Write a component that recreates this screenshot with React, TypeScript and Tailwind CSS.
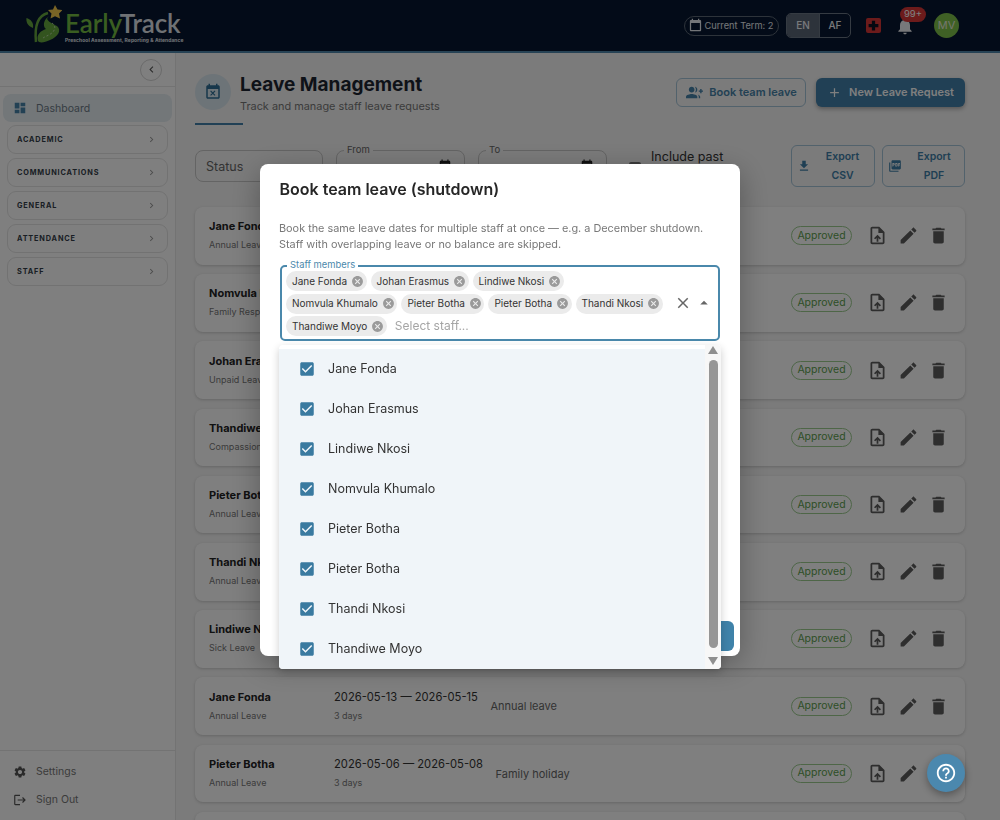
import React from 'react';

const P = {
  dash: 'M3 13h8V3H3v10zm0 8h8v-6H3v6zm10 0h8V11h-8v10zm0-18v6h8V3h-8z',
  settings: 'M19.14 12.94c.04-.3.06-.61.06-.94 0-.32-.02-.64-.07-.94l2.03-1.58c.18-.14.23-.41.12-.61l-1.92-3.32c-.12-.22-.37-.29-.59-.22l-2.39.96c-.5-.38-1.03-.7-1.62-.94l-.36-2.54c-.04-.24-.24-.41-.48-.41h-3.84c-.24 0-.43.17-.47.41l-.36 2.54c-.59.24-1.13.57-1.62.94l-2.39-.96c-.22-.08-.47 0-.59.22L2.74 8.87c-.12.21-.08.47.12.61l2.03 1.58c-.05.3-.09.63-.09.94s.02.64.07.94l-2.03 1.58c-.18.14-.23.41-.12.61l1.92 3.32c.12.22.37.29.59.22l2.39-.96c.5.38 1.03.7 1.62.94l.36 2.54c.05.24.24.41.48.41h3.84c.24 0 .44-.17.47-.41l.36-2.54c.59-.24 1.13-.56 1.62-.94l2.39.96c.22.08.47 0 .59-.22l1.92-3.32c.12-.22.07-.47-.12-.61l-2.01-1.58zM12 15.6c-1.98 0-3.6-1.62-3.6-3.6s1.62-3.6 3.6-3.6 3.6 1.62 3.6 3.6-1.62 3.6-3.6 3.6z',
  logout: 'M17 7l-1.41 1.41L18.17 11H8v2h10.17l-2.58 2.58L17 17l5-5zM4 5h8V3H4c-1.1 0-2 .9-2 2v14c0 1.1.9 2 2 2h8v-2H4V5z',
  edit: 'M3 17.25V21h3.75L17.81 9.94l-3.75-3.75L3 17.25zM20.71 7.04c.39-.39.39-1.02 0-1.41l-2.34-2.34c-.39-.39-1.02-.39-1.41 0l-1.83 1.83 3.75 3.75 1.83-1.83z',
  trash: 'M6 19c0 1.1.9 2 2 2h8c1.1 0 2-.9 2-2V7H6v12zM19 4h-3.5l-1-1h-5l-1 1H5v2h14V4z',
  upload: 'M14 2H6c-1.1 0-1.99.9-1.99 2L4 20c0 1.1.89 2 1.99 2H18c1.1 0 2-.9 2-2V8l-6-6zm4 18H6V4h7v5h5v11zM8 15.01l1.41 1.41L11 14.84V19h2v-4.16l1.59 1.59L16 15.01 12.01 11z',
  download: 'M19 9h-4V3H9v6H5l7 7 7-7zM5 18v2h14v-2H5z',
  pdf: 'M20 2H8c-1.1 0-2 .9-2 2v12c0 1.1.9 2 2 2h12c1.1 0 2-.9 2-2V4c0-1.1-.9-2-2-2zm-8.5 7.5c0 .83-.67 1.5-1.5 1.5H9v2H7.5V7H10c.83 0 1.5.67 1.5 1.5v1zm5 2c0 .83-.67 1.5-1.5 1.5h-2.5V7H15c.83 0 1.5.67 1.5 1.5v3zm4-3H19v1h1.5V11H19v2h-1.5V7h3v1.5zM9 9.5h1v-1H9v1zM4 6H2v14c0 1.1.9 2 2 2h14v-2H4V6zm10 5.5h1v-3h-1v3z',
  cancel: 'M12 2C6.47 2 2 6.47 2 12s4.47 10 10 10 10-4.47 10-10S17.53 2 12 2zm5 13.59L15.59 17 12 13.41 8.41 17 7 15.59 10.59 12 7 8.41 8.41 7 12 10.59 15.59 7 17 8.41 13.41 12 17 15.59z',
  close: 'M19 6.41 17.59 5 12 10.59 6.41 5 5 6.41 10.59 12 5 17.59 6.41 19 12 13.41 17.59 19 19 17.59 13.41 12z',
  check: 'M19 3H5c-1.11 0-2 .9-2 2v14c0 1.1.89 2 2 2h14c1.11 0 2-.9 2-2V5c0-1.1-.89-2-2-2zm-9 14l-5-5 1.41-1.41L10 14.17l7.59-7.59L19 8l-9 9z',
  bell: 'M12 22c1.1 0 2-.9 2-2h-4c0 1.1.89 2 2 2zm6-6v-5c0-3.07-1.64-5.64-4.5-6.32V4c0-.83-.67-1.5-1.5-1.5s-1.5.67-1.5 1.5v.68C7.63 5.36 6 7.92 6 11v5l-2 2v1h16v-1l-2-2z',
  group: 'M22 9V7h-2v2h-2v2h2v2h2v-2h2V9h-2zM8 12c2.21 0 4-1.79 4-4s-1.79-4-4-4-4 1.79-4 4 1.79 4 4 4zm0 2c-2.67 0-8 1.34-8 4v2h16v-2c0-2.66-5.33-4-8-4zm4.51-2.05C13.43 10.88 14 9.5 14 8s-.57-2.88-1.49-3.95C14.47 4.27 16 5.95 16 8s-1.53 3.73-3.49 3.95zM16.53 14.83C17.42 15.66 18 16.7 18 18v2h2v-2c0-1.45-1.59-2.51-3.47-3.17z',
  event: 'M9.31 17l2.44-2.44L14.19 17l1.06-1.06-2.44-2.44 2.44-2.44L14.19 10l-2.44 2.44L9.31 10l-1.06 1.06 2.44 2.44-2.44 2.44L9.31 17zM19 3h-1V1h-2v2H8V1H6v2H5c-1.11 0-1.99.9-1.99 2L3 19c0 1.1.89 2 2 2h14c1.1 0 2-.9 2-2V5c0-1.1-.9-2-2-2zm0 16H5V8h14v11z',
  help: 'M11 18h2v-2h-2v2zm1-16C6.48 2 2 6.48 2 12s4.48 10 10 10 10-4.48 10-10S17.52 2 12 2zm0 18c-4.41 0-8-3.59-8-8s3.59-8 8-8 8 3.59 8 8-3.59 8-8 8zm0-14c-2.21 0-4 1.79-4 4h2c0-1.1.9-2 2-2s2 .9 2 2c0 2-3 1.75-3 5h2c0-2.25 3-2.5 3-5 0-2.21-1.79-4-4-4z',
  calendar: 'M19 3h-1V1h-2v2H8V1H6v2H5c-1.11 0-2 .9-2 2v14c0 1.1.89 2 2 2h14c1.1 0 2-.9 2-2V5c0-1.1-.9-2-2-2zm0 16H5V8h14v11z',
  plus: 'M19 13h-6v6h-2v-6H5v-2h6V5h2v6h6v2z',
  left: 'M15.41 7.41 14 6l-6 6 6 6 1.41-1.41L10.83 12z',
  right: 'M10 6 8.59 7.41 13.17 12l-4.58 4.59L10 18l6-6z',
};

const Icon = ({ d, size = 24, className = '' }: { d: string; size?: number; className?: string }) => (
  <svg viewBox="0 0 24 24" width={size} height={size} fill="currentColor" className={`shrink-0 ${className}`}>
    <path d={d} />
  </svg>
);

const groups = ['Academic', 'Communications', 'General', 'Attendance', 'Staff'];

const rows = [
  ['Jane Fonda', 'Annual Leave', '2026-07-01 — 2026-07-03', 'Annual leave'],
  ['Nomvula Khumalo', 'Family Responsibility', '2026-06-22 — 2026-06-23', 'Family matter'],
  ['Johan Erasmus', 'Unpaid Leave', '2026-06-15 — 2026-06-19', 'Personal'],
  ['Thandiwe Moyo', 'Compassionate Leave', '2026-06-10 — 2026-06-11', 'Funeral'],
  ['Pieter Botha', 'Annual Leave', '2026-06-01 — 2026-06-03', 'Annual leave'],
  ['Thandi Nkosi', 'Annual Leave', '2026-05-25 — 2026-05-27', 'Annual leave'],
  ['Lindiwe Nkosi', 'Sick Leave', '2026-05-18 — 2026-05-19', 'Flu'],
  ['Jane Fonda', 'Annual Leave', '2026-05-13 — 2026-05-15', 'Annual leave'],
  ['Pieter Botha', 'Annual Leave', '2026-05-06 — 2026-05-08', 'Family holiday'],
  ['Thandi Nkosi', 'Annual Leave', '2026-04-27 — 2026-04-29', 'Annual leave'],
];

const staff = ['Jane Fonda', 'Johan Erasmus', 'Lindiwe Nkosi', 'Nomvula Khumalo', 'Pieter Botha', 'Pieter Botha', 'Thandi Nkosi', 'Thandiwe Moyo'];

const Header = () => (
  <header className="h-[53px] shrink-0 bg-[#071730] border-b-2 border-[#4f86aa] flex items-center pl-[26px] pr-[41px]">
    <svg viewBox="0 0 36 40" width="36" height="40" className="shrink-0 -mt-[3px]">
      <path d="M7 24C1 22 0 17 0.500 14 4 15 8 18 7 24z" fill="#67a93f" />
      <path d="M22 9C14 11 8 19 10 38" fill="none" stroke="#67a93f" strokeWidth="2.5" />
      <path d="M24 12C17 15 25 19 31 22 36 26 32 33 24 36 18 39 13 39 12 37 10 30 15 27 20 25 16 22 18 14 24 12z" fill="#67a93f" />
      <path d="M26 19C29 21 30 24 27 28 24 31 20 32 17 34" fill="none" stroke="#d9e8cf" strokeWidth="0.7" strokeDasharray="2 2" />
      <path d="M29 1l2.500 4.500 5 .5-3.500 3.500 1 5-5-2.300-4.500 2.300 1-5-3.500-3.500 5-.5z" fill="#f5c94c" />
    </svg>
    <div className="ml-[3px] mt-[1px] flex flex-col">
      <div className="text-[26px] leading-[28px] font-semibold tracking-[-0.1px] font-['Lato',sans-serif]">
        <span className="text-[#74bd42]">Early</span>
        <span className="text-[#dfe3e8]">Track</span>
      </div>
      <div className="text-[4.9px] leading-[7px] font-bold tracking-[0.1px] text-[#e3e8ef] whitespace-nowrap">Preschool Assessment, Reporting &amp; Attendance</div>
    </div>
    <div className="ml-auto flex items-center">
      <div className="h-[20px] w-[95px] rounded-full border border-[#5a6675] flex items-center pl-[3px] gap-[1.5px] text-[#e8edf2]">
        <Icon d={P.calendar} size={15} />
        <span className="text-[9.25px] whitespace-nowrap">Current Term: 2</span>
      </div>
      <div className="ml-[7px] h-[25px] w-[65px] rounded-[5px] border border-[#6b7684] flex overflow-hidden text-[10px] font-medium text-[#f0f3f6]">
        <div className="w-[33px] bg-[#5b6676] flex items-center justify-center border-r border-[#6b7684]">EN</div>
        <div className="flex-1 flex items-center justify-center">AF</div>
      </div>
      <div className="ml-[15px] w-[15px] h-[15px] rounded-[2px] bg-[#d93636] flex items-center justify-center">
        <Icon d="M9 3h6v6h6v6h-6v6H9v-6H3V9h6z" size={13} className="text-[#0a1020]" />
      </div>
      <div className="relative ml-[14px] w-[20px] h-[20px] text-[#eef1f4]">
        <Icon d={P.bell} size={20} />
        <span className="absolute -top-[9px] left-[5px] h-[15px] w-[26px] rounded-full bg-[#d93636] text-white text-[9.5px] flex items-center justify-center">99+</span>
      </div>
      <div className="ml-[19px] w-[25px] h-[25px] rounded-full bg-[#7fc24a] text-[#e8eedd] text-[11px] flex items-center justify-center">MV</div>
    </div>
  </header>
);

const Sidebar = () => (
  <aside className="w-[176px] shrink-0 bg-white border-r border-[#e6e6e6] flex flex-col">
    <div className="h-[34px] shrink-0 border-b border-[#e6e6e6] flex items-center justify-end pr-[13px]">
      <div className="w-[22px] h-[22px] rounded-full border border-[#d5d5d5] flex items-center justify-center text-[#555]">
        <Icon d={P.left} size={13} />
      </div>
    </div>
    <div className="mt-[7px] mx-[3px] h-[28px] rounded-lg bg-[#e6eef3] flex items-center pl-[10px] gap-[9px] w-[169px]">
      <Icon d={P.dash} size={14} className="text-[#4682a9]" />
      <span className="text-[10.5px] pt-[1px] text-[#6c7a86]">Dashboard</span>
    </div>
    <div className="mt-[3px] mx-[7px] w-[161px] flex flex-col gap-[4px]">
      {groups.map((g) => (
        <div key={g} className="h-[29px] rounded-[9px] border border-[#e4e4e4] flex items-center justify-between pl-[9px] pr-[10px]">
          <span className="text-[7.3px] pt-[2px] font-bold uppercase tracking-[0.85px] text-[#333c48]">{g}</span>
          <Icon d={P.right} size={11} className="text-[#999]" />
        </div>
      ))}
    </div>
    <div className="mt-auto h-[70px] border-t border-[#e6e6e6] flex flex-col pl-[13px] pt-[13px] gap-[12px] text-[#777] shrink-0">
      <div className="flex items-center gap-[9px] h-[16px]">
        <Icon d={P.settings} size={14} className="text-[#555]" />
        <span className="text-[10.5px]">Settings</span>
      </div>
      <div className="flex items-center gap-[9px] h-[16px]">
        <Icon d={P.logout} size={14} className="text-[#555]" />
        <span className="text-[10.5px]">Sign Out</span>
      </div>
    </div>
  </aside>
);

const DateField = ({ label, width }: { label: string; width: string }) => (
  <div className={`relative h-[32px] ${width} rounded-lg border border-[#c8c8c8] flex items-center justify-between pl-[13px] pr-[12px]`}>
    <span className="absolute -top-[7px] left-[7px] bg-[#f6f6f6] px-[3px] text-[9.5px] leading-[12px] text-[#666]">{label}</span>
    <span className="text-[12px] mt-[7px] text-[#333]">dd/mm/yyyy</span>
    <Icon d={P.calendar} size={14} className="text-[#222]" />
  </div>
);

const Row = ({ r }: { r: string[] }) => (
  <div className="h-[57.6px] shrink-0 rounded-lg bg-white shadow-[0_1px_3px_rgba(0,0,0,0.18)] flex items-center pl-[14px] pr-[16px]">
    <div className="w-[125px] shrink-0">
      <div className="text-[11px] leading-[14px] font-bold text-[#222] whitespace-nowrap">{r[0]}</div>
      <div className="mt-[5px] text-[9px] leading-[14px] text-[#777] whitespace-nowrap">{r[1]}</div>
    </div>
    <div className="shrink-0">
      <div className="text-[11.2px] leading-[14px] text-[#333] whitespace-nowrap">{r[2]}</div>
      <div className="mt-[5px] text-[9px] leading-[14px] text-[#777]">3 days</div>
    </div>
    <div className="ml-[12.500px] mt-[1px] text-[11px] text-[#666] whitespace-nowrap">{r[3]}</div>
    <div className="ml-auto h-[19px] w-[61px] rounded-full border border-[#9ccc8f] text-[#5c9e4d] text-[10.5px] flex items-center justify-center">Approved</div>
    <div className="ml-[15px] flex items-center gap-[9.500px] text-[#5c5c5c]">
      <Icon d={P.upload} size={21} />
      <Icon d={P.edit} size={21} />
      <Icon d={P.trash} size={21} />
    </div>
  </div>
);

const Main = () => (
  <main className="flex-1 min-w-0 overflow-hidden pl-[19px] pr-[35px] pt-[21px] flex flex-col">
    <div className="flex justify-between shrink-0 h-[36px]">
      <div className="flex">
        <div className="w-[36px] h-[36px] rounded-full bg-[#dbe8f0] flex items-center justify-center text-[#2f6f96]">
          <Icon d={P.event} size={18} />
        </div>
        <div className="ml-[9px] -mt-[1px]">
          <h1 className="text-[19px] leading-[24px] font-bold text-[#1c2530]">Leave Management</h1>
          <p className="mt-[1px] text-[10.9px] leading-[16px] text-[#777]">Track and manage staff leave requests</p>
        </div>
      </div>
      <div className="flex gap-[10px] mt-[4px]">
        <div className="h-[29px] w-[130px] rounded-md border border-[#a5c4d8] flex items-center justify-center gap-[6px] pl-[1px] text-[#4682a9]">
          <Icon d={P.group} size={17} />
          <span className="text-[11px] font-semibold whitespace-nowrap">Book team leave</span>
        </div>
        <div className="h-[29px] w-[149px] rounded-md bg-[#4280aa] shadow-[0_2px_4px_rgba(0,0,0,0.3)] flex items-center justify-center gap-[7px] text-white">
          <Icon d={P.plus} size={15} />
          <span className="text-[11px] font-semibold whitespace-nowrap">New Leave Request</span>
        </div>
      </div>
    </div>
    <div className="mt-[13px] h-[2px] w-[48px] bg-[#4280aa] shrink-0" />
    <div className="mt-[20px] h-[42px] shrink-0 flex items-center">
      <div className="h-[32px] w-[128px] rounded-lg border border-[#c8c8c8] flex items-center pl-[10px] pt-[2px] text-[12.5px] text-[#666]">Status</div>
      <div className="ml-[13px]"><DateField label="From" width="w-[129px]" /></div>
      <div className="ml-[13px]"><DateField label="To" width="w-[129px]" /></div>
      <div className="ml-[22px] w-[12px] h-[12px] rounded-[2px] border-2 border-[#777] mt-[3px]" />
      <div className="ml-[10px] w-[76px] text-[12.5px] leading-[19px] text-[#333]">Include past leave</div>
      <div className="ml-auto flex gap-[7px]">
        <div className="h-[42px] w-[84px] rounded-md border border-[#a5c4d8] flex items-center pl-[5px] text-[#3f7fa8]">
          <Icon d={P.download} size={14} />
          <span className="flex-1 text-center px-[9px] text-[10.5px] font-semibold leading-[19px]">Export CSV</span>
        </div>
        <div className="h-[42px] w-[83px] rounded-md border border-[#a5c4d8] flex items-center pl-[5px] text-[#3f7fa8]">
          <Icon d={P.pdf} size={14} />
          <span className="flex-1 text-center pl-[10px] pr-[8px] text-[10.5px] font-semibold leading-[19px]">Export PDF</span>
        </div>
      </div>
    </div>
    <div className="mt-[20px] flex flex-col gap-[9.6px]">
      {rows.map((r, i) => <Row key={i} r={r} />)}
    </div>
  </main>
);

const Chip = ({ name }: { name: string }) => (
  <span className="h-[20px] rounded-full bg-[#ebebeb] flex items-center pl-[6px] pr-[2.5px] gap-[4px] text-[10px] text-[#333] whitespace-nowrap">
    {name}
    <Icon d={P.cancel} size={13} className="text-[#9a9a9a]" />
  </span>
);

const StaffSelect = () => (
  <div className="relative mt-[13px] mx-[20px] h-[76px] rounded-[5px] border-2 border-[#4a88ab] flex">
    <span className="absolute -top-[8px] left-[5px] bg-white px-[3px] text-[9.4px] leading-[12px] text-[#4a88ab]">Staff members</span>
    <div className="flex-1 flex flex-wrap content-start gap-x-[4px] gap-y-[2.500px] pl-[4px] pr-[3px] pt-[4px]">
      {staff.map((s, i) => <Chip key={i} name={s} />)}
      <span className="ml-[4px] h-[20px] flex items-center text-[12px] text-[#a5a5a5]">Select staff...</span>
    </div>
    <div className="w-[47px] shrink-0 flex items-center pl-[3px] text-[#666]">
      <Icon d={P.close} size={18} />
      <Icon d="m7 14 5-5 5 5z" size={18} className="ml-[3px]" />
    </div>
  </div>
);

const StaffList = () => (
  <div className="absolute left-[19px] top-[181px] w-[442px] h-[324px] bg-white rounded-[4px] shadow-[0_3px_8px_rgba(0,0,0,0.2)] flex pt-[4px] overflow-hidden">
    <div className="w-[426px] flex flex-col">
      {staff.map((s, i) => (
        <div key={i} className="h-[40px] shrink-0 bg-[#f0f5f9] flex items-center pl-[19px] gap-[12px]">
          <Icon d={P.check} size={18} className="text-[#3a7aa0]" />
          <span className="text-[12.5px] text-[#333]">{s}</span>
        </div>
      ))}
    </div>
    <div className="flex-1 bg-[#f7f7f7] flex flex-col items-center -mt-[4px] text-[#8f8f8f]">
      <svg viewBox="0 0 10 8" width="10" height="8" fill="currentColor" className="mt-[1px]"><path d="M5 0l5 8H0z" /></svg>
      <div className="mt-[6px] w-[9px] h-[288px] rounded-full bg-[#969696]" />
      <svg viewBox="0 0 10 8" width="10" height="8" fill="currentColor" className="mt-[9px]"><path d="M0 0h10L5 8z" /></svg>
    </div>
  </div>
);

const Dialog = () => (
  <div className="fixed inset-0 bg-black/50 flex items-center justify-center">
    <div className="relative w-[480px] h-[492px] bg-white rounded-lg shadow-[0_8px_30px_rgba(0,0,0,0.3)] flex flex-col">
      <h2 className="pl-[19.500px] pt-[15px] text-[16px] leading-[20px] font-semibold text-[#262626]">Book team leave (shutdown)</h2>
      <p className="pl-[19px] pr-[30px] mt-[21px] text-[10.87px] leading-[16px] text-[#777]">
        Book the same leave dates for multiple staff at once — e.g. a December shutdown. Staff with overlapping leave or no balance are skipped.
      </p>
      <StaffSelect />
      <div className="mt-auto flex justify-end pr-[6px] pb-[5px]">
        <div className="h-[30px] px-[16px] rounded-md bg-[#3f82a9] text-white text-[11px] font-semibold flex items-center">Book leave</div>
      </div>
      <StaffList />
    </div>
  </div>
);

export default function App() {
  return (
    <div className="h-[820px] flex flex-col overflow-hidden bg-[#f6f6f6] font-['Inter',sans-serif]">
      <Header />
      <div className="flex-1 min-h-0 flex">
        <Sidebar />
        <Main />
      </div>
      <Dialog />
      <div className="fixed left-[927px] top-[754px] w-[38px] h-[38px] rounded-full bg-[#4b88ae] shadow-[0_3px_8px_rgba(0,0,0,0.35)] flex items-center justify-center text-white">
        <Icon d={P.help} size={22} />
      </div>
    </div>
  );
}
